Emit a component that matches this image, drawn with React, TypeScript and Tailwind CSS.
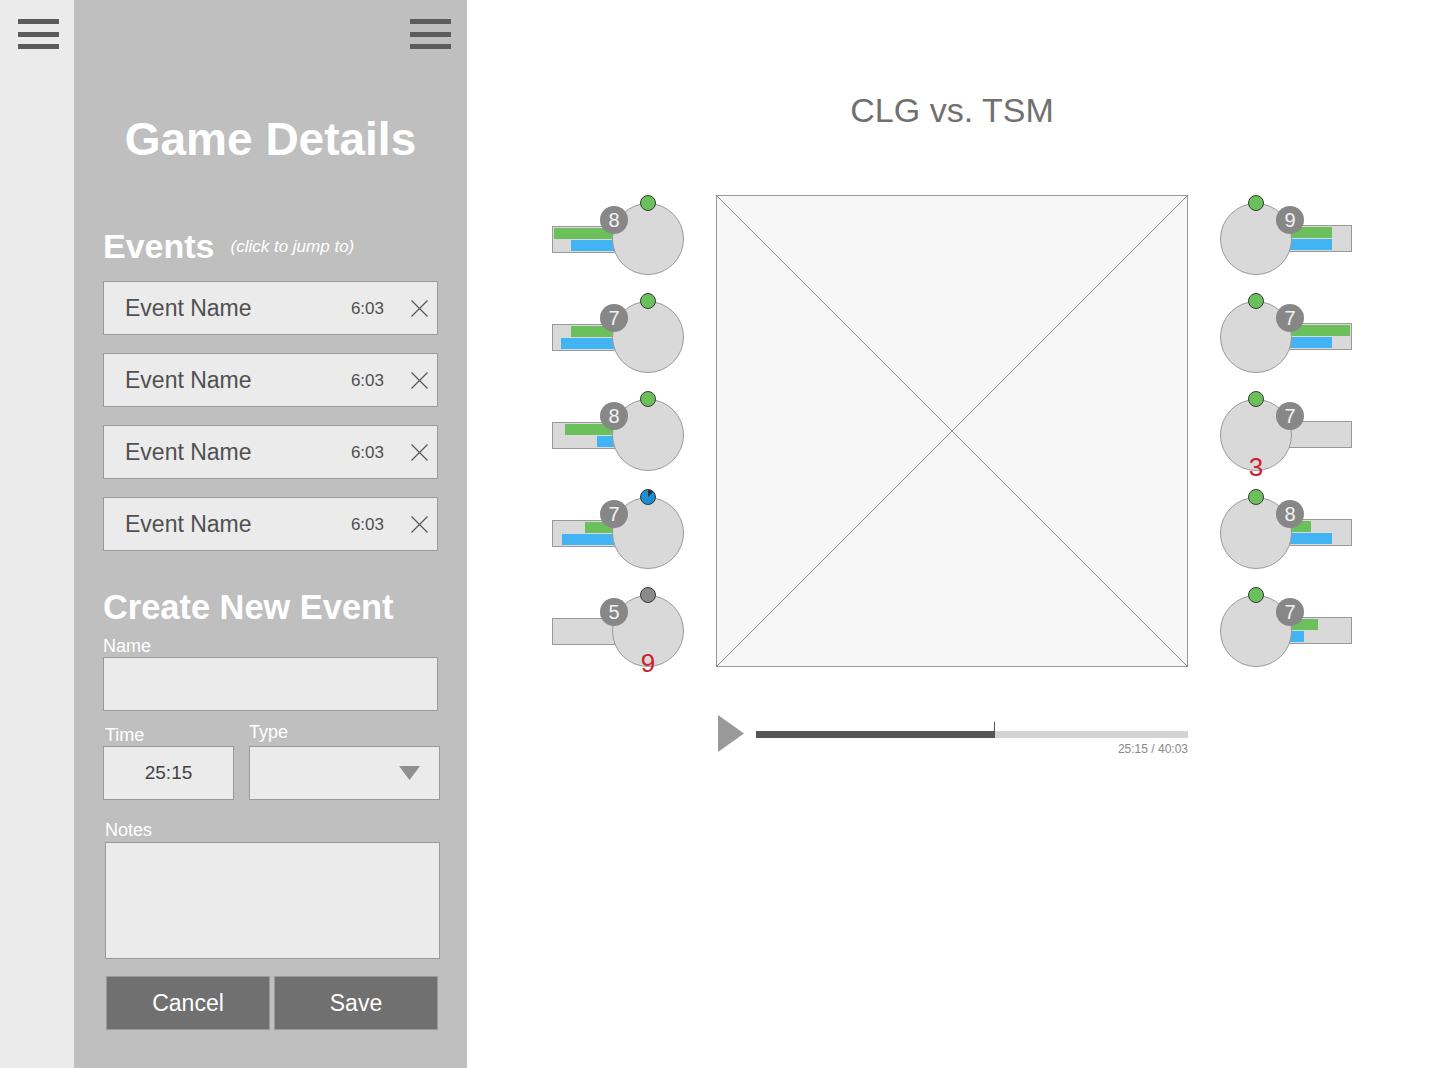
import React from "react";

type Champ = { lvl: number; g: number; b: number; dot: "green" | "blue" | "gray"; dead?: number };

// left team (bars sit left of the portrait)
const leftTeam: Champ[] = [
  { lvl: 8, g: 63, b: 46, dot: "green" },
  { lvl: 7, g: 46, b: 56, dot: "green" },
  { lvl: 8, g: 52, b: 20, dot: "green" },
  { lvl: 7, g: 32, b: 55, dot: "blue" },
  { lvl: 5, g: 0, b: 0, dot: "gray", dead: 9 },
];

// right team (bars sit right of the portrait)
const rightTeam: Champ[] = [
  { lvl: 9, g: 45, b: 45, dot: "green" },
  { lvl: 7, g: 63, b: 45, dot: "green" },
  { lvl: 7, g: 0, b: 0, dot: "green", dead: 3 },
  { lvl: 8, g: 24, b: 45, dot: "green" },
  { lvl: 7, g: 31, b: 17, dot: "green" },
];

const Hamburger: React.FC = () => (
  <div className="flex w-[41px] flex-col gap-[7.5px]">
    <div className="h-[5px] bg-[#5b5b5b]" />
    <div className="h-[5px] bg-[#5b5b5b]" />
    <div className="h-[5px] bg-[#5b5b5b]" />
  </div>
);

const StatusDot: React.FC<{ kind: Champ["dot"] }> = ({ kind }) => {
  if (kind === "blue") {
    return (
      <svg width="16" height="16" viewBox="0 0 16 16">
        <circle cx="8" cy="8" r="7.5" fill="#1a8fd6" stroke="#333" strokeWidth="1" />
        <path d="M8 8 L8 0.8 A7.2 7.2 0 0 1 13.1 2.9 Z" fill="#333" />
      </svg>
    );
  }
  return (
    <div
      className={
        kind === "green"
          ? "h-[16px] w-[16px] rounded-full border border-[#3a3a3a] bg-[#6cc05c]"
          : "h-[16px] w-[16px] rounded-full border border-[#3a3a3a] bg-[#8a8a8a]"
      }
    />
  );
};

const LeftChamp: React.FC<{ c: Champ }> = ({ c }) => (
  <div className="relative flex h-[80px] w-[132px] items-start">
    {/* gold / xp bars */}
    <div className="mt-[31px] flex h-[27px] w-[66px] shrink-0 flex-col items-end gap-[1px] border border-[#999] bg-[#d9d9d9] pt-[1px]">
      {c.g > 0 && <div className="h-[11px] bg-[#6cc05c]" style={{ width: c.g }} />}
      {c.b > 0 && <div className="h-[11px] bg-[#42b4f4]" style={{ width: c.b }} />}
    </div>
    <div className="relative z-10 -ml-[6px] mt-[8px] h-[72px] w-[72px] shrink-0 rounded-full border border-[#999] bg-[#d9d9d9]" />
    <div className="absolute left-[88px] top-0 z-20">
      <StatusDot kind={c.dot} />
    </div>
    <div className="absolute left-[48px] top-[11px] z-20 flex h-[28px] w-[28px] items-center justify-center rounded-full bg-[#878787] text-[20px] leading-none text-[#f2f2f2]">
      {c.lvl}
    </div>
    {c.dead && (
      <div className="absolute left-[60px] top-[63px] z-20 w-[72px] text-center text-[26px] leading-none text-[#c8232c]">{c.dead}</div>
    )}
  </div>
);

const RightChamp: React.FC<{ c: Champ }> = ({ c }) => (
  <div className="relative flex h-[80px] w-[132px] items-start">
    <div className="relative z-10 mt-[8px] h-[72px] w-[72px] shrink-0 rounded-full border border-[#999] bg-[#d9d9d9]" />
    <div className="-ml-[6px] mt-[30px] flex h-[27px] w-[66px] shrink-0 flex-col items-start gap-[1px] border border-[#999] bg-[#d9d9d9] pt-[1px]">
      {c.g > 0 && <div className="h-[11px] bg-[#6cc05c]" style={{ width: c.g }} />}
      {c.b > 0 && <div className="h-[11px] bg-[#42b4f4]" style={{ width: c.b }} />}
    </div>
    <div className="absolute left-[28px] top-0 z-20">
      <StatusDot kind={c.dot} />
    </div>
    <div className="absolute left-[56px] top-[11px] z-20 flex h-[28px] w-[28px] items-center justify-center rounded-full bg-[#878787] text-[20px] leading-none text-[#f2f2f2]">
      {c.lvl}
    </div>
    {c.dead && (
      <div className="absolute left-0 top-[63px] z-20 w-[72px] text-center text-[26px] leading-none text-[#c8232c]">{c.dead}</div>
    )}
  </div>
);

const EventRow: React.FC = () => (
  <div className="flex h-[54px] items-center border border-[#999] bg-[#ebebeb] pl-[21px] pr-[9px]">
    <span className="flex-1 text-[23px] leading-none text-[#505050]">Event Name</span>
    <span className="text-[17px] leading-none text-[#505050]">6:03</span>
    <svg className="ml-[27px]" width="17" height="17" viewBox="0 0 17 17">
      <path d="M0.5 0.5 L16.5 16.5 M16.5 0.5 L0.5 16.5" stroke="#555" strokeWidth="1.1" />
    </svg>
  </div>
);

const App: React.FC = () => {
  return (
    <div className="flex h-[1068px] w-full overflow-hidden bg-white font-['Liberation_Sans',Arial,sans-serif]">
      {/* Collapsed nav strip */}
      <div className="w-[74px] shrink-0 bg-[#ebebeb] pl-[18px] pt-[19px]">
        <Hamburger />
      </div>

      {/* Game details side panel */}
      <div className="flex w-[393px] shrink-0 flex-col bg-[#bfbfbf] px-[29px]">
        <div className="-mr-[13px] flex justify-end pt-[19px]">
          <Hamburger />
        </div>

        <h1 className="mt-[67px] text-center text-[46px] font-bold leading-none text-white">Game Details</h1>

        <div className="mt-[67px] flex items-start gap-[16px] text-white">
          <h2 className="text-[34px] font-bold leading-none">Events</h2>
          <span className="mt-[9px] text-[17px] italic leading-none">(click to jump to)</span>
        </div>

        <div className="mt-[18px] flex flex-col gap-[18px]">
          <EventRow />
          <EventRow />
          <EventRow />
          <EventRow />
        </div>

        <h2 className="mt-[39px] text-[34.4px] font-bold leading-none text-white">Create New Event</h2>

        <label className="mt-[13px] text-[18px] leading-none text-white">Name</label>
        <div className="mt-[2px] h-[54px] border border-[#999] bg-[#ebebeb]" />

        <div className="flex">
          <div className="flex w-[131px] shrink-0 flex-col">
            <label className="ml-[2px] mt-[15px] text-[18px] leading-none text-white">Time</label>
            <div className="mt-[2px] flex h-[54px] items-center justify-center border border-[#999] bg-[#ebebeb] text-[19px] text-[#444]">
              25:15
            </div>
          </div>
          <div className="ml-[15px] flex w-[191px] shrink-0 flex-col">
            <label className="mt-[12px] text-[18px] leading-none text-white">Type</label>
            <div className="mt-[5px] flex h-[54px] items-center justify-end border border-[#999] bg-[#ebebeb] pr-[19px]">
              <svg width="21" height="14" viewBox="0 0 21 14">
                <polygon points="0,0 21,0 10.5,14" fill="#8f8f8f" />
              </svg>
            </div>
          </div>
        </div>

        <label className="ml-[2px] mt-[21px] text-[18px] leading-none text-white">Notes</label>
        <div className="ml-[2px] mt-[3px] h-[117px] w-[335px] border border-[#999] bg-[#ebebeb]" />

        <div className="ml-[3px] mt-[17px] flex gap-[4px]">
          <button className="h-[54px] w-[164px] border border-[#999] bg-[#707070] text-[23px] text-white">Cancel</button>
          <button className="h-[54px] w-[164px] border border-[#999] bg-[#707070] text-[23px] text-white">Save</button>
        </div>
      </div>

      {/* Match view */}
      <div className="flex flex-1 flex-col items-center pr-[3px] pt-[93px]">
        <h1 className="text-[34px] leading-none text-[#707070]">CLG vs. TSM</h1>

        <div className="mt-[68px] flex gap-[32px]">
          <div className="flex w-[132px] flex-col gap-[18px]">
            {leftTeam.map((c, i) => (
              <LeftChamp key={i} c={c} />
            ))}
          </div>

          {/* map placeholder */}
          <div className="relative h-[472px] w-[472px] border border-[#999] bg-[#f7f7f7]">
            <svg className="absolute inset-0 h-full w-full" viewBox="0 0 470 470" preserveAspectRatio="none">
              <line x1="0" y1="0" x2="470" y2="470" stroke="#8c8c8c" strokeWidth="1" />
              <line x1="470" y1="0" x2="0" y2="470" stroke="#8c8c8c" strokeWidth="1" />
            </svg>
          </div>

          <div className="flex w-[132px] flex-col gap-[18px]">
            {rightTeam.map((c, i) => (
              <RightChamp key={i} c={c} />
            ))}
          </div>
        </div>

        {/* playback controls */}
        <div className="mt-[48px] flex w-[472px] items-start">
          <svg className="ml-[2px] shrink-0" width="26" height="37" viewBox="0 0 26 37">
            <polygon points="0,0 26,18.5 0,37" fill="#999" />
          </svg>
          <div className="ml-[12px] flex flex-1 flex-col pt-[16px]">
            <div className="relative h-[7px] bg-[#d4d4d4]">
              <div className="h-full w-[239px] bg-[#555]" />
              <div className="absolute left-[238px] top-[-9px] h-[9px] w-px bg-[#555]" />
            </div>
            <div className="mt-[5px] text-right text-[12px] leading-none text-[#888]">25:15 / 40:03</div>
          </div>
        </div>
      </div>
    </div>
  );
};

export default App;
